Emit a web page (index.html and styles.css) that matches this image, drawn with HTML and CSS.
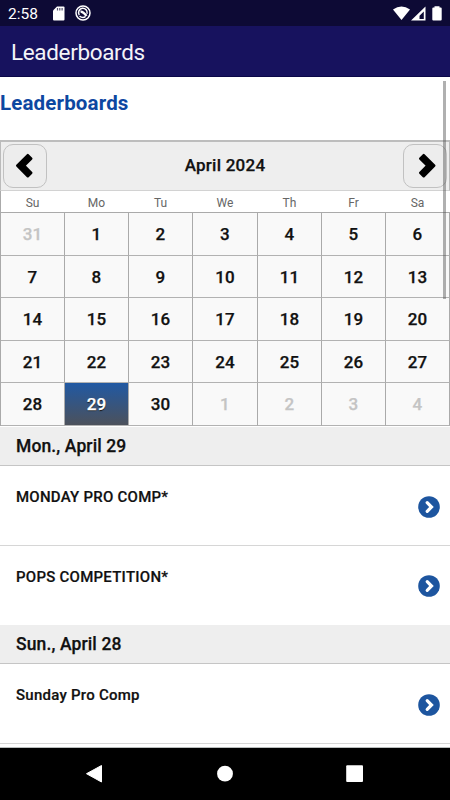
FILE: index.html
```html
<!DOCTYPE html>
<html lang="en">
<head>
<meta charset="utf-8">
<title>Leaderboards</title>
<link rel="stylesheet" href="styles.css">
</head>
<body>
<div class="status">
  <span class="time">2:58</span>
  <svg class="sd" width="12" height="15" viewBox="0 0 12 15"><path d="M4 .5h6.500q1 0 1 1V13.500q0 1-1 1h-9.500q-1 0-1-1V4.500z" fill="#fff"/><path d="M4.500 2v2.500M6.800 2v2.500M9.100 2v2.500" stroke="#55536f" stroke-width="1.200"/></svg>
  <svg class="ring" width="16" height="16" viewBox="0 0 16 16" fill="none" stroke="#fff"><circle cx="8" cy="8" r="7" stroke-width="1.500"/><path d="M4.300 10A4.300 4.300 0 1 1 12 8.800M4.500 11.200Q8 13.700 10.500 11.500" stroke-width="1.500"/><path d="M5.500 6.800Q8 6.300 11.500 11" stroke-width="2.400"/></svg>
  <span class="spacer"></span>
  <svg class="signals" width="50" height="15" viewBox="0 0 50 15"><path d="M0 3.500Q8.500-2.500 17 3.500L8.500 14z" fill="#fff"/><path fill="#fff" fill-rule="evenodd" d="M32.500 .5V14.500H18zM30.800 5.500L26.500 9.800V13H30.800z"/><path d="M41.500 1.500V.3h5v1.200h1.200q1 0 1 1V13.500q0 1-1 1h-7.400q-1 0-1-1V2.500q0-1 1-1z" fill="#fff"/></svg>
</div>
<header class="appbar">Leaderboards</header>
<main class="page">
  <h1>Leaderboards</h1>
  <section class="calendar">
    <div class="month">
      <button class="nav" aria-label="Previous month"><svg width="42" height="42" viewBox="0 0 42 42"><path d="M13.200 20.700L23.800 10.100L27.300 13.600L20.200 20.700L27.300 27.800L23.800 31.300z" stroke="#000" stroke-width="2.400" stroke-linejoin="round"/></svg></button>
      <span>April 2024</span>
      <button class="nav" aria-label="Next month"><svg width="42" height="42" viewBox="0 0 42 42"><path d="M30.300 20.700L19.700 10.100L16.200 13.600L23.300 20.700L16.200 27.800L19.700 31.300z" stroke="#000" stroke-width="2.400" stroke-linejoin="round"/></svg></button>
    </div>
    <div class="weekdays"><span>Su</span><span>Mo</span><span>Tu</span><span>We</span><span>Th</span><span>Fr</span><span>Sa</span></div>
    <div class="days">
      <span class="out">31</span><span>1</span><span>2</span><span>3</span><span>4</span><span>5</span><span>6</span>
      <span>7</span><span>8</span><span>9</span><span>10</span><span>11</span><span>12</span><span>13</span>
      <span>14</span><span>15</span><span>16</span><span>17</span><span>18</span><span>19</span><span>20</span>
      <span>21</span><span>22</span><span>23</span><span>24</span><span>25</span><span>26</span><span>27</span>
      <span>28</span><span class="selected">29</span><span>30</span><span class="out">1</span><span class="out">2</span><span class="out">3</span><span class="out">4</span>
    </div>
  </section>
  <section class="events">
    <h2>Mon., April 29</h2>
    <div class="event"><span>MONDAY PRO COMP*</span><svg width="22" height="22" viewBox="0 0 22 22"><circle cx="11" cy="11" r="10.800" fill="#1d559f"/><path d="M9.200 6.700L13.500 11L9.200 15.300" fill="none" stroke="#fff" stroke-width="3.200" stroke-linecap="round"/></svg></div>
    <div class="event last"><span>POPS COMPETITION*</span><svg width="22" height="22" viewBox="0 0 22 22"><circle cx="11" cy="11" r="10.800" fill="#1d559f"/><path d="M9.200 6.700L13.500 11L9.200 15.300" fill="none" stroke="#fff" stroke-width="3.200" stroke-linecap="round"/></svg></div>
    <h2>Sun., April 28</h2>
    <div class="event"><span>Sunday Pro Comp</span><svg width="22" height="22" viewBox="0 0 22 22"><circle cx="11" cy="11" r="10.800" fill="#1d559f"/><path d="M9.200 6.700L13.500 11L9.200 15.300" fill="none" stroke="#fff" stroke-width="3.200" stroke-linecap="round"/></svg></div>
  </section>
  <div class="scrollbar"></div>
</main>
<nav class="system">
  <svg width="450" height="52" viewBox="0 0 450 52" fill="#fff"><path d="M101.500 17.500v16.500L86.500 25.700z" stroke="#fff" stroke-linejoin="round"/><circle cx="225" cy="25.700" r="7.900"/><rect x="346.200" y="17.200" width="16.800" height="16.800" rx="1"/></svg>
</nav>
</body>
</html>
```

FILE: styles.css
```css
* { box-sizing: border-box; }
body {
  margin: 0;
  width: 450px;
  height: 800px;
  overflow: hidden;
  display: flex;
  flex-direction: column;
  background: #fff;
  color: #111;
  font-family: Roboto, sans-serif;
}
svg { display: block; flex: none; }
.status {
  height: 26px;
  flex: none;
  display: flex;
  align-items: center;
  padding: 0 8px;
  background: #0d0a35;
  color: #fff;
}
.time { width: 44px; font-size: 15.500px; line-height: 28px; padding-top: 2px; }
.sd { margin-left: 1px; }
.ring { margin-left: 10px; }
.spacer { flex: 1; }
.signals { margin-right: -1px; }
.appbar {
  height: 51px;
  flex: none;
  padding: 1px 11px 0;
  border-bottom: 1px solid #0b0748;
  background: #17125e;
  color: #f4f4f8;
  font-size: 22.500px;
  letter-spacing: -.35px;
  line-height: 50px;
}
.page {
  position: relative;
  flex: 1;
  min-height: 0;
  overflow: hidden;
  border-bottom: 1px solid #b9bdbd;
}
h1 {
  height: 63px;
  margin: 0;
  padding-top: 12px;
  color: #0d47a1;
  font-size: 20.500px;
  letter-spacing: .15px;
  line-height: 28px;
  font-weight: 700;
}
.month {
  height: 51px;
  display: flex;
  align-items: center;
  justify-content: space-between;
  padding: 0 2px;
  border: 1px solid #bbb;
  border-top: 2px solid #bdbdbd;
  border-bottom: 1px solid #d2d2d2;
  background: #eee;
  font-size: 17px;
  letter-spacing: .25px;
  font-weight: 500;
  -webkit-text-stroke: .25px;
}
.month > span { padding-bottom: 3px; }
.nav {
  width: 44px;
  height: 44px;
  padding: 0;
  border: 1px solid #c1c1c1;
  border-radius: 10px;
  background: #ededed;
}
.weekdays, .days {
  display: grid;
  grid-template-columns: 64px 64px 64px 65px 64px 64px 64px;
  border-left: 1px solid #aaa;
  text-align: center;
}
.weekdays {
  height: 21px;
  color: #666;
  font-size: 12px;
  line-height: 25px;
}
.weekdays span { padding-right: 1px; }
.days {
  grid-template-rows: 43px 42px 43px 42px 43px;
  border-top: 1px solid #aaa;
  font-size: 17px;
  letter-spacing: .2px;
  font-weight: 500;
  line-height: 42px;
  -webkit-text-stroke: .25px;
}
.days span {
  background: #f9f9f9;
  border-right: 1px solid #aaa;
  border-bottom: 1px solid #b2b2b2;
}
.days .out { color: #c4c4c4; }
.days .selected {
  background: linear-gradient(#2159a3, #4c515b);
  color: #fff;
  text-shadow: 0 1px 1px #111;
}
h2 {
  height: 39px;
  margin: 0;
  padding-left: 16px;
  border-bottom: 1px solid #c5c5c5;
  background: #eee;
  font-size: 17.500px;
  letter-spacing: .12px;
  line-height: 38px;
  font-weight: 500;
  -webkit-text-stroke: .25px;
}
.events { padding-top: 1px; }
.event {
  height: 80px;
  display: flex;
  justify-content: space-between;
  padding: 21px 10px 0 16px;
  border-bottom: 1px solid #d6d6d6;
  font-size: 15px;
  letter-spacing: .25px;
  line-height: 20px;
  font-weight: 500;
  -webkit-text-stroke: .2px;
}
.event svg { margin-top: 9px; }
.event.last { height: 79px; border-bottom: 0; }
.event.last svg { margin-top: 8px; }
.scrollbar {
  position: absolute;
  top: 4px;
  left: 443px;
  width: 3px;
  height: 218px;
  background: rgba(80, 80, 80, .45);
}
.system { height: 52px; flex: none; background: #000; }
```
